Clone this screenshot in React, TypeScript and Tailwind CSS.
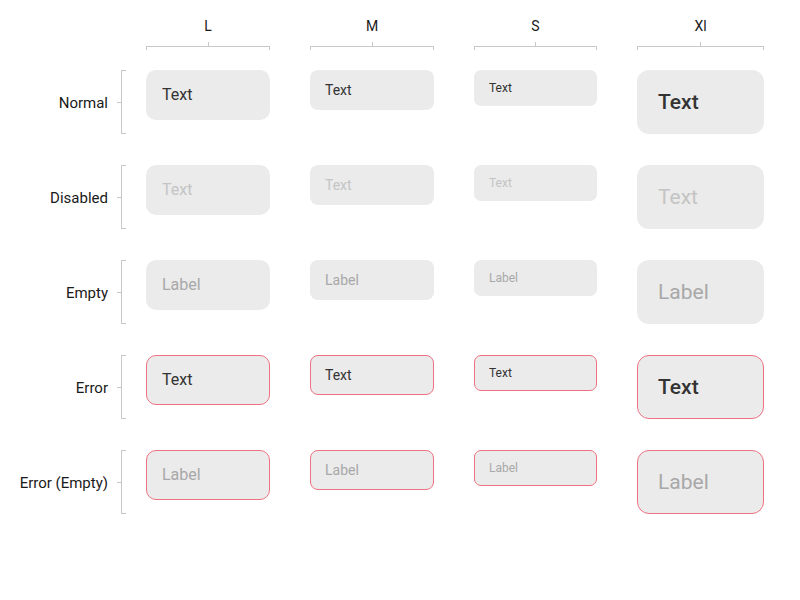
import React from "react";

type SizeKey = "L" | "M" | "S" | "Xl";
type StateKey = "normal" | "disabled" | "empty" | "error" | "errorEmpty";

const sizes: { key: SizeKey; label: string; col: string; box: string; text: string }[] = [
  { key: "L", label: "L", col: "w-[124px]", box: "h-[50px] pl-[16px] rounded-[10px]", text: "text-[16px]" },
  { key: "M", label: "M", col: "w-[124px]", box: "h-[40px] pl-[15px] rounded-[8px]", text: "text-[14px]" },
  { key: "S", label: "S", col: "w-[123px]", box: "h-[36px] pl-[15px] rounded-[7px]", text: "text-[12px]" },
  { key: "Xl", label: "Xl", col: "w-[127px]", box: "h-[64px] pl-[21px] rounded-[12px]", text: "text-[21px]" },
];

const states: { key: StateKey; label: string }[] = [
  { key: "normal", label: "Normal" },
  { key: "disabled", label: "Disabled" },
  { key: "empty", label: "Empty" },
  { key: "error", label: "Error" },
  { key: "errorEmpty", label: "Error (Empty)" },
];

function Field({ size, state }: { size: (typeof sizes)[number]; state: StateKey }) {
  const isEmpty = state === "empty" || state === "errorEmpty";
  const isError = state === "error" || state === "errorEmpty";

  let color = "text-[#333333]";
  if (state === "disabled") color = "text-[#c4c4c4]";
  if (isEmpty) color = "text-[#a8a8a8]";

  const weight = size.key === "Xl" && !isEmpty && state !== "disabled" ? "font-medium" : "font-normal";

  return (
    <div
      className={`${size.col} ${size.box} flex items-center bg-[#ebebeb] ${
        isError ? "border border-[#ee7282]" : ""
      }`}
    >
      <span className={`${size.text} ${color} ${weight} leading-none ${isError ? "-ml-px" : ""}`}>
        {isEmpty ? "Label" : "Text"}
      </span>
    </div>
  );
}

export default function App() {
  return (
    <div
      className="w-[800px] h-[600px] bg-white text-[#1a1a1a]"
      style={{ fontFamily: "Roboto, 'Noto Sans', sans-serif" }}
    >
      {/* column headers */}
      <div className="flex pt-[16px] pl-[146px] gap-x-[40px]">
        {sizes.map((s) => (
          <div key={s.key} className={`${s.col} flex flex-col`}>
            <div className="h-[20px] text-center text-[14px] leading-[20px]">{s.label}</div>
            <div className="mt-[6px] mx-auto w-px h-[4px] bg-[#c8c8c8]" />
            <div className="h-[4px] border-t border-x border-[#c8c8c8] rounded-t-[1px]" />
          </div>
        ))}
      </div>

      {/* rows */}
      <div className="mt-[20px] flex flex-col gap-y-[31px]">
        {states.map((st) => (
          <div key={st.key} className="flex items-start">
            <div className="flex items-center h-[64px]">
              <div className="w-[108px] text-right text-[15px] leading-[20px] pt-px">{st.label}</div>
              <div className="ml-[9px] w-[4px] h-px bg-[#c8c8c8]" />
              <div className="w-[5px] h-[64px] border-l border-y border-[#c8c8c8]" />
            </div>
            <div className="ml-[20px] flex items-start gap-x-[40px]">
              {sizes.map((s) => (
                <Field key={s.key} size={s} state={st.key} />
              ))}
            </div>
          </div>
        ))}
      </div>
    </div>
  );
}
